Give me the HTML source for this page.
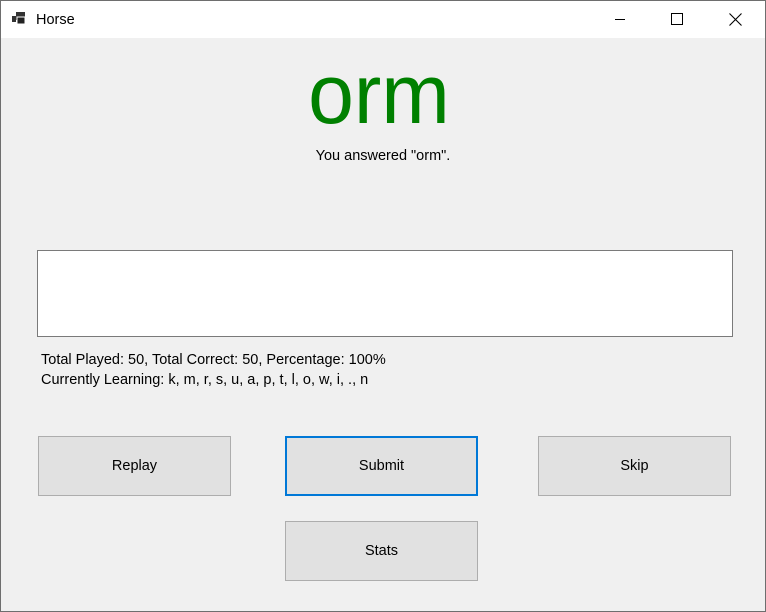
<!DOCTYPE html>
<html><head><style>
*{margin:0;padding:0;box-sizing:border-box}
body{width:766px;height:612px;background:#f0f0f0;font-family:"Liberation Sans",sans-serif;position:relative;overflow:hidden;border:1px solid #6e6e6e;color:#000}
.tb{position:absolute;left:0;top:0;width:764px;height:37px;background:#fff}
.abs{position:absolute;white-space:nowrap}
.btn{position:absolute;width:193px;height:60px;background:#e1e1e1;border:1px solid #adadad;font-size:14.5px;display:flex;align-items:center;justify-content:center}
</style></head><body>
<div class="tb">
<svg class="abs" style="left:11px;top:10px" width="16" height="16"><rect x="0" y="5" width="4" height="6" fill="#333"/><rect x="4" y="1" width="9" height="8" fill="#333"/><rect x="5" y="6" width="8" height="7" fill="#222" stroke="#fff" stroke-width="1"/></svg>
<div class="abs" style="left:35px;top:11px;font-size:14.5px">Horse</div>
<div class="abs" style="left:614px;top:18px;width:10px;height:1px;background:#000"></div>
<div class="abs" style="left:670px;top:12px;width:12px;height:12px;border:1px solid #000"></div>
<svg class="abs" style="left:728px;top:12px" width="13" height="13"><path d="M0.5 0.5L12.5 12.5M12.5 0.5L0.5 12.5" stroke="#000" stroke-width="1.1"/></svg>
</div>
<div class="abs" style="left:-4px;width:764px;top:43px;text-align:center;font-size:84px;color:#008000;line-height:100px;transform:scaleX(0.98)">orm</div>
<div class="abs" style="left:0;width:764px;top:147px;text-align:center;font-size:14.5px">You answered "orm".</div>
<div class="abs" style="left:36px;top:249px;width:696px;height:87px;background:#fff;border:1px solid #7a7a7a"></div>
<div class="abs" style="left:40px;top:349px;font-size:14.5px;line-height:20px">Total Played: 50, Total Correct: 50, Percentage: 100%<br>Currently Learning: k, m, r, s, u, a, p, t, l, o, w, i, ., n</div>
<div class="btn" style="left:37px;top:435px">Replay</div>
<div class="btn" style="left:284px;top:435px;border:2px solid #0078d7">Submit</div>
<div class="btn" style="left:537px;top:435px">Skip</div>
<div class="btn" style="left:284px;top:520px">Stats</div>
</body></html>
